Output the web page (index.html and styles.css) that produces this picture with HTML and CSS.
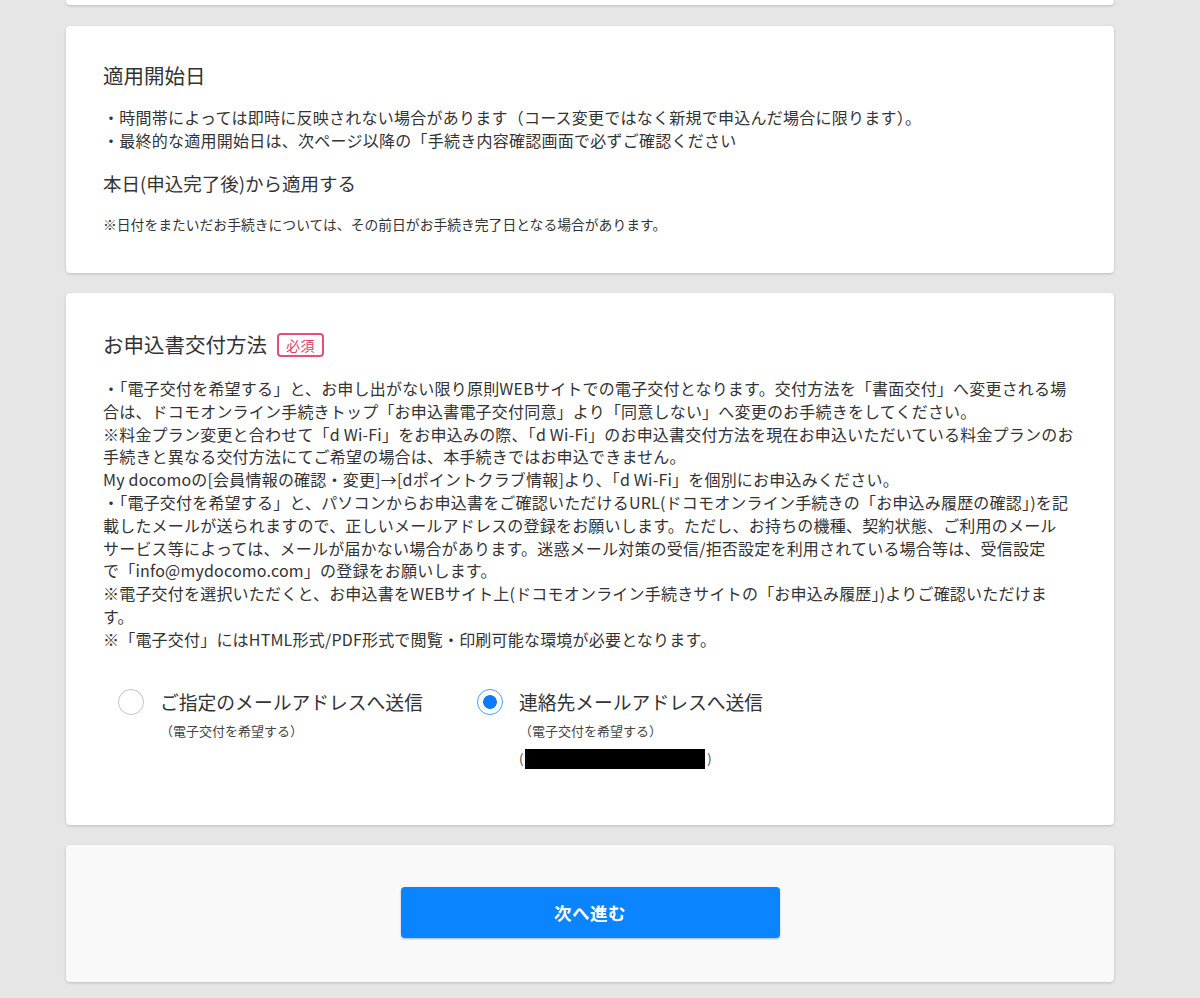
FILE: index.html
```html
<!DOCTYPE html>
<html lang="ja">
<head>
<meta charset="utf-8">
<title>お申込み</title>
<link rel="stylesheet" href="styles.css">
</head>
<body>
<main class="page">
  <div class="card card-stub"></div>

  <section class="card">
    <h2 class="card-title">適用開始日</h2>
    <ul class="bullets">
      <li>・時間帯によっては即時に反映されない場合があります（コース変更ではなく新規で申込んだ場合に限ります）。</li>
      <li>・最終的な適用開始日は、次ページ以降の「手続き内容確認画面で必ずご確認ください</li>
    </ul>
    <p class="start-value">本日(申込完了後)から適用する</p>
    <p class="note">※日付をまたいだお手続きについては、その前日がお手続き完了日となる場合があります。</p>
  </section>

  <section class="card card-delivery">
    <h2 class="card-title">お申込書交付方法<span class="badge">必須</span></h2>
    <p class="desc">・「電子交付を希望する」と、お申し出がない限り原則WEBサイトでの電子交付となります。交付方法を「書面交付」へ変更される場<br>合は、ドコモオンライン手続きトップ「お申込書電子交付同意」より「同意しない」へ変更のお手続きをしてください。<br>※料金プラン変更と合わせて「d Wi-Fi」をお申込みの際、「d Wi-Fi」のお申込書交付方法を現在お申込いただいている料金プランのお<br>手続きと異なる交付方法にてご希望の場合は、本手続きではお申込できません。<br>My docomoの[会員情報の確認・変更]→[dポイントクラブ情報]より、「d Wi-Fi」を個別にお申込みください。<br>・「電子交付を希望する」と、パソコンからお申込書をご確認いただけるURL(ドコモオンライン手続きの「お申込み履歴の確認」)を記<br>載したメールが送られますので、正しいメールアドレスの登録をお願いします。ただし、お持ちの機種、契約状態、ご利用のメール<br>サービス等によっては、メールが届かない場合があります。迷惑メール対策の受信/拒否設定を利用されている場合等は、受信設定<br>で「info@mydocomo.com」の登録をお願いします。<br>※電子交付を選択いただくと、お申込書をWEBサイト上(ドコモオンライン手続きサイトの「お申込み履歴」)よりご確認いただけま<br>す。<br>※「電子交付」にはHTML形式/PDF形式で閲覧・印刷可能な環境が必要となります。</p>

    <div class="options">
      <label class="option">
        <span class="radio"></span>
        <span class="option-body">
          <span class="option-label">ご指定のメールアドレスへ送信</span>
          <span class="option-sub">（電子交付を希望する）</span>
        </span>
      </label>
      <label class="option">
        <span class="radio radio-on"></span>
        <span class="option-body">
          <span class="option-label">連絡先メールアドレスへ送信</span>
          <span class="option-sub">（電子交付を希望する）</span>
          <span class="option-mail">(<span class="redacted"></span>)</span>
        </span>
      </label>
    </div>
  </section>

  <section class="card card-action">
    <button class="next-btn" type="button">次へ進む</button>
  </section>
</main>
</body>
</html>
```

FILE: styles.css
```css
html, body {
  margin: 0;
  padding: 0;
  background: #e6e6e6;
}

body {
  font-family: "Noto Sans CJK JP", "Noto Sans", sans-serif;
  color: #333333;
}

.page {
  width: 1048px;
  margin: 0 0 0 66px;
  display: flex;
  flex-direction: column;
  gap: 20px;
  padding-bottom: 20px;
}

.card {
  background: #ffffff;
  border-radius: 4px;
  box-shadow: 0 1px 3px rgba(0, 0, 0, 0.18);
  padding: 34px 37px 39px;
}

.card-stub {
  height: 5px;
  padding: 0;
  border-radius: 0 0 4px 4px;
  margin-bottom: 1px;
}

.card-title {
  margin: 0;
  font-size: 20.5px;
  font-weight: normal;
  line-height: 31px;
  color: #333333;
  display: flex;
  align-items: center;
  gap: 10px;
}

.bullets {
  list-style: none;
  margin: 15px 0 0;
  padding: 0;
  font-size: 16px;
  letter-spacing: 0.25px;
  line-height: 23px;
}

.start-value {
  margin: 17px 0 0;
  font-size: 18.5px;
  line-height: 28px;
}

.note {
  margin: 17px 0 0;
  font-size: 13.8px;
  line-height: 20px;
}

.card-delivery {
  padding-top: 36px;
}

.badge {
  display: inline-block;
  border: 2px solid #e0507a;
  border-radius: 4px;
  color: #d9406c;
  font-size: 14px;
  line-height: 20px;
  padding: 0 7px;
  letter-spacing: 0.5px;
}

.desc {
  margin: 17px 0 0;
  font-size: 16px;
  letter-spacing: 0.2px;
  line-height: 22.8px;
}

.options {
  display: flex;
  gap: 54px;
  margin: 37px 0 0 15px;
  padding-bottom: 17px;
}

.option {
  display: flex;
  align-items: flex-start;
  gap: 16px;
}

.radio {
  box-sizing: border-box;
  width: 26px;
  height: 26px;
  border-radius: 50%;
  border: 1px solid #c4c4c4;
  background: #ffffff;
  margin-top: 1px;
  flex: none;
}

.radio-on {
  border: 1.5px solid #4aa0ff;
  background: radial-gradient(circle, #0a7cff 0 6.5px, #ffffff 7.2px);
}

.option-body {
  display: flex;
  flex-direction: column;
}

.option-label {
  font-size: 18.8px;
  line-height: 28px;
  color: #333333;
}

.option-sub {
  font-size: 13px;
  line-height: 20px;
  margin-top: 5px;
  color: #444444;
}

.option-mail {
  display: flex;
  align-items: center;
  font-size: 13px;
  line-height: 20px;
  margin-top: 8px;
  color: #444444;
}

.redacted {
  display: inline-block;
  width: 180px;
  height: 20px;
  background: #000000;
  margin: 0 2px;
}

.card-action {
  background: #f9f9f9;
  display: flex;
  justify-content: center;
  padding: 42px 0 44px;
}

.next-btn {
  width: 379px;
  height: 51px;
  border: none;
  border-radius: 4px;
  background: #0a84ff;
  box-shadow: 0 1px 2px rgba(0, 60, 140, 0.35);
  color: #ffffff;
  font-family: "Noto Sans CJK JP", sans-serif;
  font-size: 17.5px;
  font-weight: bold;
  letter-spacing: 0.5px;
  cursor: pointer;
}
```
